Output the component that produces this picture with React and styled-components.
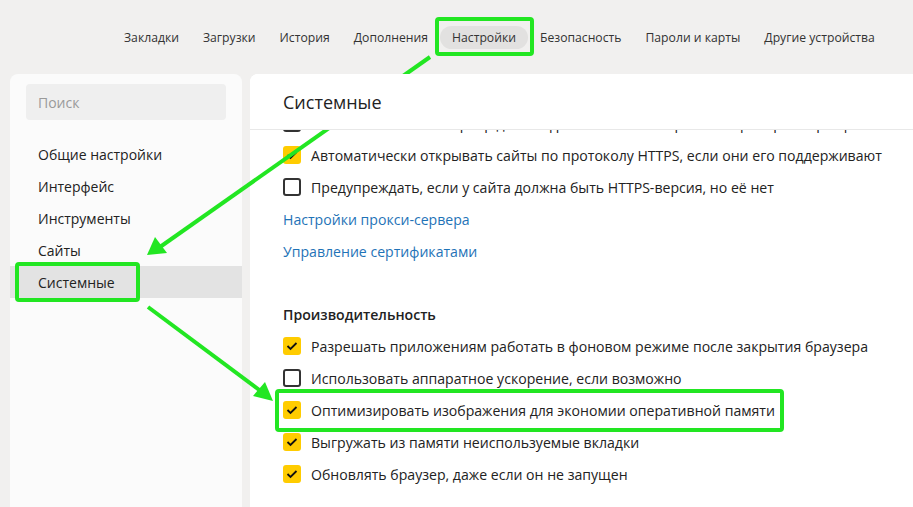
import React from "react";
import styled, { createGlobalStyle } from "styled-components";

const Global = createGlobalStyle`
  html, body {
    margin: 0;
    padding: 0;
    background: #f1f0ef;
    font-family: "Open Sans", "Noto Sans", sans-serif;
    color: #222;
    overflow: hidden;
  }
`;

const Page = styled.div`
  position: relative;
  width: 913px;
  height: 507px;
  overflow: hidden;
`;

const TopNav = styled.nav`
  height: 74px;
  display: flex;
  align-items: center;
  padding-left: 112px;
  box-sizing: border-box;
`;

const NavItem = styled.div`
  font-size: 12.2px;
  color: #333;
  height: 23px;
  line-height: 23px;
  padding: 0 12px;
  border-radius: 12px;
  background: ${(p) => (p.active ? "#e2e1e0" : "transparent")};
  white-space: nowrap;
`;

const Body = styled.div`
  display: flex;
  gap: 8px;
  padding-left: 10px;
  height: 433px;
`;

const Sidebar = styled.aside`
  width: 232px;
  flex-shrink: 0;
  background: #fbfbfb;
  border-radius: 8px 8px 0 0;
  padding-top: 10px;
  box-sizing: border-box;
`;

const Search = styled.div`
  margin: 0 16px 18px;
  height: 36px;
  border-radius: 4px;
  background: #efefef;
  color: #9a9a9a;
  font-size: 14px;
  display: flex;
  align-items: center;
  padding-left: 12px;
`;

const MenuItem = styled.div`
  height: 32px;
  display: flex;
  align-items: center;
  padding-left: 28px;
  font-size: 14px;
  color: #222;
  background: ${(p) => (p.active ? "#e3e3e3" : "transparent")};
`;

const Main = styled.main`
  flex: 1;
  background: #fff;
  border-radius: 8px 0 0 0;
  display: flex;
  flex-direction: column;
  overflow: hidden;
`;

const Header = styled.div`
  height: 55px;
  flex-shrink: 0;
  border-bottom: 1px solid #e8e8e8;
  display: flex;
  align-items: center;
  padding-left: 33px;
  font-size: 18px;
  color: #222;
  position: relative;
  z-index: 1;
  background: #fff;
`;

const Scroll = styled.div`
  flex: 1;
  overflow: hidden;
  padding-left: 33px;
`;

const List = styled.div`
  margin-top: -23px;
`;

const Row = styled.div`
  height: 32px;
  display: flex;
  align-items: center;
  gap: 10px;
  font-size: 14.1px;
  color: #222;
  white-space: nowrap;
`;

const Box = styled.span`
  width: 18px;
  height: 18px;
  box-sizing: border-box;
  border-radius: 3px;
  flex-shrink: 0;
  display: flex;
  align-items: center;
  justify-content: center;
  background: ${(p) => (p.checked ? "#ffcc00" : "#fff")};
  border: ${(p) => (p.checked ? "none" : "2px solid #333")};
`;

const LinkRow = styled.div`
  height: 32px;
  display: flex;
  align-items: center;
  font-size: 14.1px;
  color: #1f73b7;
`;

const Section = styled.div`
  margin-top: 31px;
  height: 32px;
  display: flex;
  align-items: center;
  font-size: 14.1px;
  font-weight: 600;
  color: #222;
`;

const Overlay = styled.svg`
  position: absolute;
  left: 0;
  top: 0;
  pointer-events: none;
`;

function Check({ checked }) {
  return (
    <Box checked={checked}>
      {checked && (
        <svg width="12" height="10" viewBox="0 0 12 10">
          <polyline
            points="1.5,5 4.5,8 10.5,2"
            fill="none"
            stroke="#111"
            strokeWidth="1.8"
          />
        </svg>
      )}
    </Box>
  );
}

function Option({ checked, children }) {
  return (
    <Row>
      <Check checked={checked} />
      {children}
    </Row>
  );
}

const nav = [
  "Закладки",
  "Загрузки",
  "История",
  "Дополнения",
  "Настройки",
  "Безопасность",
  "Пароли и карты",
  "Другие устройства",
];

const menu = ["Общие настройки", "Интерфейс", "Инструменты", "Сайты", "Системные"];

export default function App() {
  return (
    <Page>
      <Global />
      <TopNav>
        {nav.map((n) => (
          <NavItem key={n} active={n === "Настройки"}>
            {n}
          </NavItem>
        ))}
      </TopNav>
      <Body>
        <Sidebar>
          <Search>Поиск</Search>
          {menu.map((m) => (
            <MenuItem key={m} active={m === "Системные"}>
              {m}
            </MenuItem>
          ))}
        </Sidebar>
        <Main>
          <Header>Системные</Header>
          <Scroll>
            <List>
              <Option>
                Использовать DNS-сервер для шифрования DNS-запросов и проверки сертификатов
              </Option>
              <Option checked>
                Автоматически открывать сайты по протоколу HTTPS, если они его поддерживают
              </Option>
              <Option>Предупреждать, если у сайта должна быть HTTPS-версия, но её нет</Option>
              <LinkRow>Настройки прокси-сервера</LinkRow>
              <LinkRow>Управление сертификатами</LinkRow>
              <Section>Производительность</Section>
              <Option checked>
                Разрешать приложениям работать в фоновом режиме после закрытия браузера
              </Option>
              <Option>Использовать аппаратное ускорение, если возможно</Option>
              <Option checked>
                Оптимизировать изображения для экономии оперативной памяти
              </Option>
              <Option checked>Выгружать из памяти неиспользуемые вкладки</Option>
              <Option checked>Обновлять браузер, даже если он не запущен</Option>
            </List>
          </Scroll>
        </Main>
      </Body>
      <Overlay width="913" height="507" viewBox="0 0 913 507">
        <g fill="none" stroke="#22e622" strokeWidth="4">
          <rect x="437" y="19" width="95" height="35" rx="2" />
          <rect x="17" y="264" width="121" height="36" rx="2" />
          <rect x="277" y="391" width="505" height="39" rx="2" />
          <line x1="430" y1="57" x2="160" y2="247" />
          <line x1="148" y1="307" x2="262" y2="392" />
        </g>
        <g fill="#22e622">
          <polygon points="147,255 155,237 167,253" />
          <polygon points="273,401 253,396 265,382" />
        </g>
      </Overlay>
    </Page>
  );
}
